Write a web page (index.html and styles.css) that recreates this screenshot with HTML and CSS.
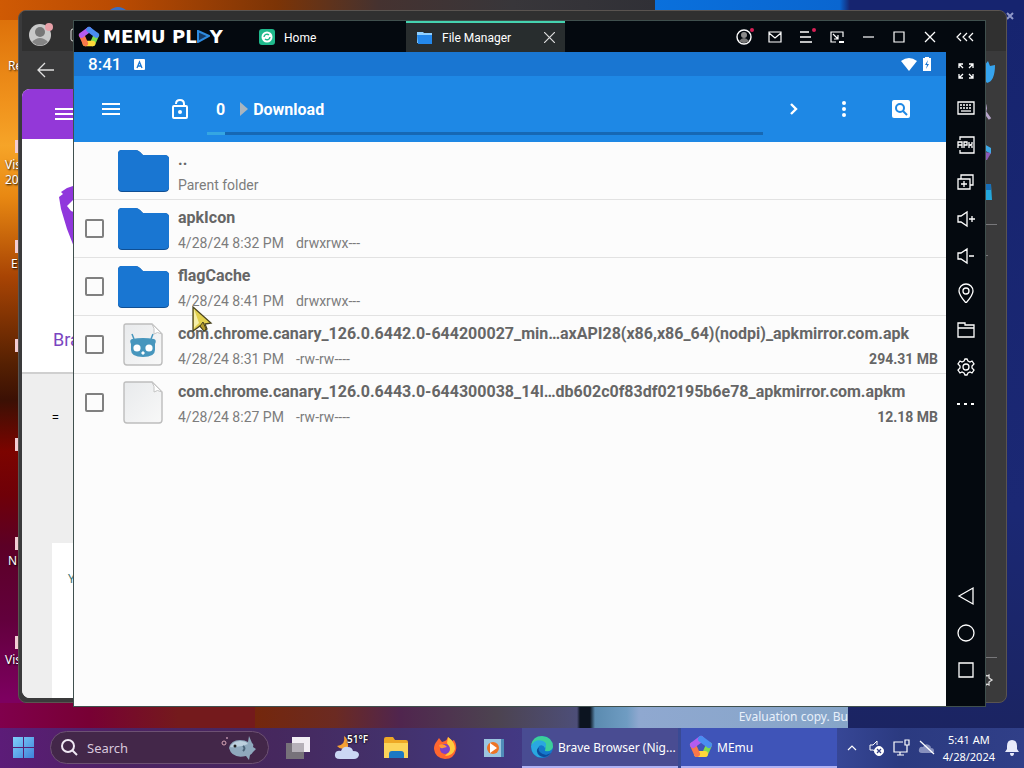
FILE: index.html
```html
<!DOCTYPE html>
<html lang="en">
<head>
    <meta charset="UTF-8">
    <meta name="viewport" content="width=device-width, initial-scale=1.0">
    <title>MEmu - File Manager</title>
    <link rel="stylesheet" href="styles.css">
</head>
<body>
    <svg class="defs" width="0" height="0" aria-hidden="true">
        <symbol id="memu" viewBox="0 0 24 24">
            <g fill="none" stroke-width="6" stroke-linecap="round">
                <path d="M16 19L20 10" stroke="#7fdc4c"/>
                <path d="M8 19H16" stroke="#ffd83a"/>
                <path d="M4 10L8 19" stroke="#f9774a"/>
                <path d="M12 4L4 10" stroke="#b45cf0"/>
                <path d="M20 10L12 4" stroke="#4a8df0"/>
            </g>
        </symbol>
        <symbol id="folder" viewBox="0 0 52 43">
            <path d="M5 1H18Q21 1 23 3L26 6H47Q52 6 52 10V39Q52 43 47 43H5Q1 43 1 39V5Q1 1 5 1Z" fill="#0f4f94"/>
            <path d="M5 1H18Q21 1 23 3L26 6H47Q52 6 52 10V38Q52 42 47 42H5Q1 42 1 38V5Q1 1 5 1Z" fill="#1976d2"/>
        </symbol>
        <symbol id="file" viewBox="0 0 40 43">
            <linearGradient id="paper" x1="0" y1="0" x2="1" y2="1">
                <stop offset="0" stop-color="#e8eaec"/>
                <stop offset="1" stop-color="#f8f8f8"/>
            </linearGradient>
            <path d="M3 1H29L39 11V39Q39 42 36 42H4Q1 42 1 39V3Q1 1 3 1Z" fill="url(#paper)" stroke="#bdbdbd" stroke-width="1.4"/>
            <path d="M29 1L39 11Q34 8 31 11Q32 5 29 1Z" fill="#fff" stroke="#c4c4c4"/>
        </symbol>
    </svg>

    <div class="desktop">
        <span class="shortcut s1">Re</span>
        <span class="shortcut s2">Vis<br>20</span>
        <span class="shortcut s3">E</span>
        <span class="shortcut s4">N</span>
        <span class="shortcut s5">Vis</span>
        <i class="tile t1"></i><i class="tile t2"></i><i class="tile t3"></i><i class="tile t4"></i><i class="tile t5"></i><i class="tile t6"></i>
        <svg class="desk-close" viewBox="0 0 10 10"><path d="M2 2L8 8M8 2L2 8" stroke="#8f98c8" stroke-width="2"/></svg>
        <i class="desk-dot"></i>
        <div class="watermark">Evaluation copy. Bu</div>

        <!-- browser window behind -->
        <section class="browser">
            <div class="browser-bar">
                <svg width="26" height="24" viewBox="0 0 26 24">
                    <circle cx="12" cy="12" r="11" fill="#c9c9c9"/>
                    <circle cx="12" cy="9" r="5" fill="#777"/>
                    <path d="M4 19Q12 11 20 19Q12 26 4 19Z" fill="#858585"/>
                    <circle cx="21" cy="4" r="4" fill="#e8a0a8"/>
                </svg>
                <svg width="12" height="14" viewBox="0 0 12 14" fill="none" stroke="#ddd"><rect x="1" y="1" width="14" height="12" rx="2"/></svg>
            </div>
            <div class="browser-nav">
                <button type="button" aria-label="Back">
                    <svg width="18" height="16" viewBox="0 0 18 16" fill="none" stroke="#e0e0e0" stroke-width="1.3"><path d="M17 8H1M8 1L1 8L8 15"/></svg>
                </button>
            </div>
            <div class="browser-body">
                <div class="page">
                    <div class="page-head">
                        <svg width="24" height="14" viewBox="0 0 24 14" stroke="#fff" stroke-width="2"><path d="M0 2H24M0 7H24M0 12H24"/></svg>
                    </div>
                    <div class="page-hero">
                        <svg width="30" height="70" viewBox="0 0 30 70"><path d="M9 3L18 0H30V70L16 62L9 44L3 24L1 12L5 9L3 7Z" fill="#9037dc"/><path d="M18 12L9 21L13 26L30 32V8Z" fill="#fff"/></svg>
                        <span>Bra</span>
                    </div>
                    <div class="page-rest">
                        <span class="equals">=</span>
                        <div class="page-card">Y</div>
                    </div>
                </div>
                <div class="browser-side">
                    <svg width="16" height="22" viewBox="0 0 16 22"><path d="M0 5L4 0L6 5L11 4Q11 20 3 22L0 18Z" fill="#36a4ee"/></svg>
                    <svg width="16" height="22" viewBox="0 0 16 22"><path d="M0 2Q3 8 0 11M1 11L6 18" fill="none" stroke="#b5a4c8" stroke-width="3"/></svg>
                    <svg width="16" height="22" viewBox="0 0 16 22"><path d="M0 3L7 7V13L0 9Z" fill="#3eaae8"/><path d="M0 11L7 12L3 19H0Z" fill="#8b5bb8"/></svg>
                    <svg width="16" height="22" viewBox="0 0 16 22"><path d="M0 3H7L8 19H0Z" fill="#23a8dd"/><path d="M2 3H7V9H1Z" fill="#176fb8"/></svg>
                    <hr>
                    <hr class="short">
                    <hr class="low">
                    <svg class="side-gear" width="10" height="16" viewBox="0 0 10 16"><path d="M0 2L3 4L5 3L5 6L8 8L5 10L5 13L3 12L0 15M0 6Q3 8 0 10" fill="none" stroke="#ddd" stroke-width="1.3"/></svg>
                </div>
            </div>
        </section>

        <!-- emulator -->
        <section class="memu">
            <header class="titlebar">
                <div class="brand">
                    <svg width="22" height="22"><use href="#memu"/></svg>
                    <span>MEMU PL</span><svg width="13" height="13" viewBox="0 0 13 13"><path d="M1 1L12 6L1 12Z" fill="#153a66" stroke="#2d8ae0" stroke-width="2"/></svg><span>Y</span>
                </div>
                <nav class="tabs">
                    <button type="button" class="tab home">
                        <svg width="16" height="16" viewBox="0 0 16 16"><rect width="16" height="16" rx="3" fill="#1fb98c"/><circle cx="8" cy="8" r="5.5" fill="#fff"/><path d="M5 8A3 3 0 0 1 10 6M11 8A3 3 0 0 1 6 10" fill="none" stroke="#1fb98c" stroke-width="1.4"/></svg>
                        Home
                    </button>
                    <button type="button" class="tab active">
                        <svg width="16" height="12" viewBox="0 0 16 12"><path d="M0 0H6L7 1H15V11H0Z" fill="#8fd0ff"/><path d="M0 3H15V12H1Z" fill="#2488ea"/></svg>
                        File Manager
                        <svg class="tab-close" width="11" height="11" viewBox="0 0 11 11" stroke="#ddd" stroke-width="1.2"><path d="M0 0L11 11M11 0L0 11"/></svg>
                    </button>
                </nav>
                <div class="win-buttons">
                    <button type="button" aria-label="Account"><svg viewBox="0 0 20 20" fill="none"><circle cx="10" cy="10" r="7" stroke="#fff" stroke-width="1.4"/><circle cx="10" cy="8" r="3" fill="#8a8a8a"/><path d="M5 14Q10 8 15 14Q10 18 5 14Z" fill="#777"/><circle cx="18" cy="3" r="2" fill="#d81f55"/></svg></button>
                    <button type="button" aria-label="Messages"><svg viewBox="0 0 20 20" fill="none" stroke="#fff" stroke-width="1.2"><path d="M4 5H16V15H4ZM4 6L10 11L16 6"/></svg></button>
                    <button type="button" aria-label="Menu"><svg viewBox="0 0 20 20" fill="none" stroke="#fff" stroke-width="1.3"><path d="M4 5H13M4 10H15M4 15H16"/><circle cx="18" cy="3" r="2" fill="#d81f55" stroke="none"/></svg></button>
                    <button type="button" aria-label="Small window"><svg viewBox="0 0 20 20" fill="none" stroke="#fff" stroke-width="1.2"><path d="M9 15H4V5H16V10M6 7L11 12M11 8V12H7"/><path d="M12 15H17" stroke-width="2"/></svg></button>
                    <button type="button" aria-label="Minimize"><svg viewBox="0 0 20 20" stroke="#fff" stroke-width="1.2"><path d="M5 10H16"/></svg></button>
                    <button type="button" aria-label="Maximize"><svg viewBox="0 0 20 20" fill="none" stroke="#fff" stroke-width="1.2"><path d="M5 5H15V15H5Z"/></svg></button>
                    <button type="button" aria-label="Close"><svg viewBox="0 0 20 20" stroke="#fff" stroke-width="1.3"><path d="M5 5L15 15M15 5L5 15"/></svg></button>
                    <button type="button" class="wide" aria-label="Collapse sidebar"><svg viewBox="0 0 20 20" fill="none" stroke="#fff" stroke-width="1.2"><path d="M6 6L2 10L6 14M12 6L8 10L12 14M18 6L14 10L18 14"/></svg></button>
                </div>
            </header>

            <div class="memu-body">
                <main class="android">
                    <div class="statusbar">
                        <span class="time">8:41</span>
                        <svg width="11" height="11" viewBox="0 0 11 11"><rect width="11" height="11" rx="1" fill="#fff"/><path d="M3 9L5.500 3L8 9M4 7H7" fill="none" stroke="#1976d2" stroke-width="1.3"/></svg>
                        <span class="grow"></span>
                        <svg width="16" height="13" viewBox="0 0 16 13"><path d="M0 3Q8 -3 16 3L8 13Z" fill="#fff"/></svg>
                        <svg width="8" height="14" viewBox="0 0 8 14"><path d="M2 0H6V1H8V14H0V1H2Z" fill="#fff"/><path d="M5 3L2 8H4L3 12L6 7H4Z" fill="#1976d2"/></svg>
                    </div>
                    <div class="toolbar">
                        <button type="button" class="menu" aria-label="Open menu"><svg width="18" height="12" viewBox="0 0 18 12" stroke="#fff" stroke-width="2"><path d="M0 1H18M0 6H18M0 11H18"/></svg></button>
                        <div class="path">
                            <div class="crumbs">
                                <svg width="16" height="20" viewBox="0 0 16 20" fill="none" stroke="#fff" stroke-width="2"><rect x="1" y="7" width="14" height="12" rx="1"/><path d="M4 5Q4 1 8 1Q12 1 12 5V7"/><circle cx="8" cy="13" r="2" fill="#fff" stroke="none"/></svg>
                                <a href="#" class="root">0</a>
                                <svg class="sep" width="8" height="16" viewBox="0 0 8 16"><path d="M0 1L8 8L0 15Z" fill="#a9b5bf"/></svg>
                                <a href="#">Download</a>
                            </div>
                            <div class="scroll"><span></span></div>
                        </div>
                        <div class="actions">
                            <button type="button" aria-label="Next"><svg width="18" height="18" viewBox="0 0 18 18" fill="none" stroke="#fff" stroke-width="2.400"><path d="M7 4L12 9L7 14"/></svg></button>
                            <button type="button" aria-label="More"><svg width="18" height="18" viewBox="0 0 18 18" fill="#fff"><circle cx="9" cy="3" r="2"/><circle cx="9" cy="9" r="2"/><circle cx="9" cy="15" r="2"/></svg></button>
                            <button type="button" aria-label="Search"><svg width="18" height="18" viewBox="0 0 18 18"><rect width="18" height="18" rx="2" fill="#fff"/><circle cx="8" cy="8" r="4" fill="none" stroke="#1e88e5" stroke-width="2"/><path d="M11 11L15 15" stroke="#1e88e5" stroke-width="2"/></svg></button>
                        </div>
                    </div>

                    <ul class="files">
                        <li>
                            <span class="nocheck"></span>
                            <svg class="thumb"><use href="#folder"/></svg>
                            <div class="info"><strong>..</strong><p>Parent folder</p></div>
                        </li>
                        <li>
                            <input type="checkbox" aria-label="apkIcon">
                            <svg class="thumb"><use href="#folder"/></svg>
                            <div class="info"><strong>apkIcon</strong><p>4/28/24 8:32 PM <span>drwxrwx---</span></p></div>
                        </li>
                        <li>
                            <input type="checkbox" aria-label="flagCache">
                            <svg class="thumb"><use href="#folder"/></svg>
                            <div class="info"><strong>flagCache</strong><p>4/28/24 8:41 PM <span>drwxrwx---</span></p></div>
                        </li>
                        <li>
                            <input type="checkbox" aria-label="com.chrome.canary_126.0.6442.0 apk">
                            <svg class="thumb" viewBox="0 0 52 43">
                                <use href="#file" x="6" y="0" width="40" height="43"/>
                                <path d="M17 16L15 11M34 16L36 11" stroke="#4796bd" stroke-width="1.500"/>
                                <path d="M15 16Q26 14 37 16Q40 17 38 21V27Q38 34 26 34Q14 34 14 27V21Q12 17 15 16Z" fill="#4796bd"/>
                                <circle cx="20" cy="25" r="3.600" fill="#fff"/><circle cx="32" cy="25" r="3.600" fill="#fff"/>
                                <path d="M24 30L26 28L28 30L26 32Z" fill="#fff"/>
                            </svg>
                            <div class="info"><strong>com.chrome.canary_126.0.6442.0-644200027_min…axAPI28(x86,x86_64)(nodpi)_apkmirror.com.apk</strong><p>4/28/24 8:31 PM <span>-rw-rw----</span><b>294.31 MB</b></p></div>
                        </li>
                        <li>
                            <input type="checkbox" aria-label="com.chrome.canary_126.0.6443.0 apkm">
                            <svg class="thumb" viewBox="0 0 52 43"><use href="#file" x="6" y="0" width="40" height="43"/></svg>
                            <div class="info"><strong>com.chrome.canary_126.0.6443.0-644300038_14l…db602c0f83df02195b6e78_apkmirror.com.apkm</strong><p>4/28/24 8:27 PM <span>-rw-rw----</span><b>12.18 MB</b></p></div>
                        </li>
                    </ul>
                </main>

                <aside class="tools">
                    <button type="button" aria-label="Full screen"><svg viewBox="0 0 20 20"><path d="M3 7V3H7M3 3L7 7M13 3H17V7M17 3L13 7M3 13V17H7M3 17L7 13M17 13V17H13M17 17L13 13"/></svg></button>
                    <button type="button" aria-label="Key mapping"><svg viewBox="0 0 20 20"><path d="M2 4H18V16H2Z"/><path d="M4 7H16M4 10H16" stroke-dasharray="2 1"/><path d="M5 13H15"/></svg></button>
                    <button type="button" aria-label="Install APK"><svg viewBox="0 0 20 20"><path d="M4 5V2H18V18H4V15M2 13V7H6V13M2 10H6M8 13V7H11V10H8M13 7V13M16 7V9L14 10L16 11V13"/></svg></button>
                    <button type="button" aria-label="Multi window"><svg viewBox="0 0 20 20"><path d="M2 7H14V17H2ZM5 7V3H17V13H14M8 9V15M5 12H11"/></svg></button>
                    <button type="button" aria-label="Volume up"><svg viewBox="0 0 20 20"><path d="M2 7H5L11 3V17L5 13H2ZM13 10H19M16 7V13"/></svg></button>
                    <button type="button" aria-label="Volume down"><svg viewBox="0 0 20 20"><path d="M2 7H5L11 3V17L5 13H2ZM13 10H18"/></svg></button>
                    <button type="button" aria-label="Location"><svg viewBox="0 0 20 20"><path d="M10 20Q3 12 3 8A7 7 0 0 1 17 8Q17 12 10 20Z"/><circle cx="10" cy="8" r="3"/></svg></button>
                    <button type="button" aria-label="Shared folder"><svg viewBox="0 0 20 20"><path d="M2 17V3H9V5H18V17ZM2 8H18"/></svg></button>
                    <button type="button" aria-label="Settings"><svg viewBox="0 0 20 20"><path d="M8 4L9 2H11L12 4L14 5L16 4L18 7L16 9V11L18 13L16 16L14 15L12 16L11 18H9L8 16L6 15L4 16L2 13L4 11V9L2 7L4 4L6 5Z"/><circle cx="10" cy="10" r="3"/></svg></button>
                    <button type="button" aria-label="More"><svg viewBox="0 0 20 20"><path d="M1 10H4M8 10H11M15 10H18" stroke-width="2"/></svg></button>
                    <span class="grow"></span>
                    <button type="button" aria-label="Back"><svg viewBox="0 0 20 20"><path d="M3 10L17 2V18Z"/></svg></button>
                    <button type="button" aria-label="Home"><svg viewBox="0 0 20 20"><circle cx="10" cy="10" r="8"/></svg></button>
                    <button type="button" aria-label="Recent"><svg viewBox="0 0 20 20"><path d="M3 3H17V17H3Z"/></svg></button>
                </aside>
            </div>
        </section>

        <svg class="cursor" width="22" height="28" viewBox="0 0 22 28"><path d="M1 1L19 17L13 18L15 23L12 25L8 20L1 25Z" fill="#e2d04e" stroke="#4a4420" stroke-width="1.300"/><path d="M2 3L7 17L2 22Z" fill="#f6efa8"/><path d="M8 20L11 16L14 23L12 25Z" fill="#b49b2c" stroke="#4a4420"/></svg>
    </div>

    <footer class="taskbar">
        <button type="button" class="start" aria-label="Start"><svg width="22" height="22" viewBox="0 0 22 22"><linearGradient id="win" x1="0" y1="0" x2="1" y2="1"><stop offset="0" stop-color="#7fd0fa"/><stop offset="1" stop-color="#3f83da"/></linearGradient><path d="M0 0H10V10H0ZM11 0H21V10H11ZM0 11H10V21H0ZM11 11H21V21H11Z" fill="url(#win)"/></svg></button>
        <label class="search">
            <svg width="18" height="18" viewBox="0 0 18 18" fill="none" stroke="#f0e8f4" stroke-width="2"><circle cx="7" cy="7" r="6"/><path d="M11 11L16 16"/></svg>
            <input type="text" placeholder="Search" aria-label="Search">
            <svg width="36" height="26" viewBox="0 0 36 26"><path d="M8 13Q10 5 19 5Q24 5 27 7L28 1L31 8Q33 9 32 12L35 14L32 17Q31 19 29 20L28 25L25 21Q11 24 8 13Z" fill="#8fa9bd"/><path d="M9 12Q12 6 19 6Q25 6 27 9Q18 13 9 12Z" fill="#bcd0de"/><circle cx="14" cy="11" r="1.500" fill="#222"/><path d="M22 11Q25 13 22 16" fill="none" stroke="#4a6478" stroke-width="2"/><circle cx="3" cy="8" r="2" fill="none" stroke="#d8a5b5"/><circle cx="6" cy="3" r="1" fill="#b890a8"/></svg>
        </label>
        <div class="pins">
            <button type="button" aria-label="Task view"><svg width="24" height="24" viewBox="0 0 24 24"><path d="M0 7H18V23H0Z" fill="#77727a"/><path d="M6 1H24V16H6Z" fill="#f2eef4"/><path d="M6 7H18V16H6Z" fill="#b5b0b8"/></svg></button>
            <button type="button" class="weather" aria-label="Weather"><svg width="26" height="26" viewBox="0 0 26 26"><path d="M10 1Q12 10 3 11Q7 16 14 12Q15 4 10 1Z" fill="#f5a033"/><path d="M6 24Q0 24 1 19Q2 15 7 16Q9 11 14 12Q18 12 19 16Q25 16 25 20Q24 24 20 24Z" fill="#cbd7f4"/></svg><span>51°F</span></button>
            <button type="button" aria-label="File Explorer"><svg width="24" height="24" viewBox="0 0 24 24"><path d="M0 3Q0 1 2 1H9L11 4H22Q24 4 24 6V22H0Z" fill="#eea825"/><path d="M0 7H24V22H0Z" fill="#fcd45a"/><path d="M5 22V18Q5 15 8 15H17Q20 15 20 18V22Z" fill="#1d78c4"/></svg></button>
            <button type="button" aria-label="Firefox"><svg width="24" height="24" viewBox="0 0 24 24"><path d="M4 5L6 2L9 6L12 5Q14 4 15 1L19 5L21 4Q24 9 23 14Q21 23 12 23Q2 22 1 13Q1 8 4 5Z" fill="#ff662f"/><path d="M15 1Q22 6 22 13Q20 20 12 20Q19 14 14 7Z" fill="#ffcb3d"/><circle cx="12" cy="13" r="5" fill="#7c41c8"/><path d="M6 9Q11 7 14 11L10 12Q7 13 6 9Z" fill="#ff9838"/></svg></button>
            <button type="button" aria-label="Media Player"><svg width="20" height="20" viewBox="0 0 20 20"><path d="M0 1H20V19H0Z" fill="#9cc6e0"/><path d="M17 1H20V19H17Z" fill="#4f8cb8"/><circle cx="9" cy="10" r="6" fill="#ee7424"/><path d="M6 5L13 10L6 15Z" fill="#fff"/></svg></button>
        </div>
        <button type="button" class="task browser-task">
            <svg width="24" height="24" viewBox="0 0 24 24"><circle cx="12" cy="12" r="11" fill="#1478cc"/><path d="M1 10Q3 1 12 1Q23 2 23 12Q22 17 15 16Q17 10 11 8Q6 6 1 10Z" fill="#3ccf9a"/><path d="M1 11Q5 3 13 6Q18 8 15 13Q13 9 9 11Q6 18 14 22Q2 24 1 11Z" fill="#2aa8e0"/><path d="M9 12Q7 18 16 20L21 18Q16 24 10 21Q4 16 9 12Z" fill="#0d4c9c"/></svg>
            <span>Brave Browser (Nig...</span>
        </button>
        <button type="button" class="task memu-task">
            <svg width="24" height="24"><use href="#memu"/></svg>
            <span>MEmu</span>
        </button>
        <div class="tray">
            <svg class="more" width="10" height="16" viewBox="0 0 10 16" fill="none" stroke="#fff" stroke-width="1.200"><path d="M1 10L5 6L9 10"/></svg>
            <svg width="16" height="16" viewBox="0 0 16 16" fill="none" stroke="#fff"><path d="M6 11L4 10H1V5H4L8 1V5"/><circle cx="10" cy="11" r="4.500" fill="#fff"/><path d="M8 9L12 13M12 9L8 13" stroke="#333f85" stroke-width="1.300"/></svg>
            <svg width="17" height="18" viewBox="0 0 17 18" fill="none" stroke="#fff" stroke-width="1.200"><path d="M10 3H1V13H14V9M7 13V16M4 16H11M12 1H16V6H12ZM14 6V9"/></svg>
            <svg width="17" height="16" viewBox="0 0 17 16"><path d="M4 13Q0 13 1 9Q2 6 5 7Q7 3 11 5Q13 6 13 8Q16 8 16 11Q16 13 13 13Z" fill="#8790bd"/><path d="M2 1L16 14" stroke="#fff" stroke-width="1.300"/></svg>
            <div class="clock">5:41 AM<br>4/28/2024</div>
            <svg width="14" height="18" viewBox="0 0 14 18" fill="#e8ebfa"><path d="M7 1Q12 1 12 7V10L14 13H0L2 10V7Q2 1 7 1ZM5 14H9Q9 17 7 17Q5 17 5 14Z"/></svg>
        </div>
    </footer>
</body>
</html>
```

FILE: styles.css
```css
* {
    box-sizing: border-box;
}

body {
    margin: 0;
    min-height: 100vh;
    display: flex;
    flex-direction: column;
    overflow: hidden;
    font-family: "Noto Sans", sans-serif;
    font-size: 12px;
}

button {
    display: flex;
    align-items: center;
    justify-content: center;
    padding: 0;
    border: 0;
    background: none;
    color: inherit;
    font: inherit;
}

svg {
    display: block;
    flex-shrink: 0;
}

.defs {
    position: absolute;
}

.grow {
    flex: 1;
}

/* desktop */
.desktop {
    position: relative;
    flex: 1;
    background:
        linear-gradient(90deg, #cf5a04 0, #b84a02 12%, #7c3406 27%, #453230 37%, #38363a 50%, #303036 64%, #0a70dc 64%, #0a66d0 82%, #16246f 83%) top / 100% 20px no-repeat,
        linear-gradient(90deg, #80004c 0, #780034 35%, #741a1c 70%) left bottom / 255px 25px no-repeat,
        linear-gradient(90deg, #74270c 0, #6b2a22 25%, #50254e 45%, #4c4350 75%, #4d4e78 100%) 255px bottom / 322px 25px no-repeat,
        linear-gradient(180deg, #d96a06 0, #f0921c 14%, #f6a428 20%, #e88812 27%, #a84404 38%, #552002 50%, #3b1004 55%, #7c0400 62%, #6f0008 68%, #5c0026 75%, #62003c 85%, #7d0060 96%) left / 24px 100% no-repeat,
        linear-gradient(180deg, #16246f, #1b2874 70%, #1b2462);
}

.shortcut {
    position: absolute;
    left: 5px;
    color: #fff;
    line-height: 15px;
    text-shadow: 1px 1px 2px #000;
}

.s1 { top: 58px; left: 8px; }
.s2 { top: 157px; }
.s3 { top: 256px; left: 11px; }
.s4 { top: 553px; left: 8px; }
.s5 { top: 652px; }

.tile {
    position: absolute;
    left: 15px;
    width: 4px;
    height: 13px;
    background: #f2cdd4;
}

.t1 { top: 140px; }
.t2 { top: 240px; }
.t3 { top: 339px; }
.t4 { top: 438px; }
.t5 { top: 537px; }
.t6 { top: 636px; }

.desk-close {
    position: absolute;
    top: 11px;
    right: 9px;
    width: 10px;
    height: 10px;
}

.desk-dot {
    position: absolute;
    top: 7px;
    left: 106px;
    width: 24px;
    height: 24px;
    border-radius: 50%;
    background: #3a6fc4;
}

.watermark {
    position: absolute;
    right: 176px;
    bottom: 0;
    width: 271px;
    height: 24px;
    padding-top: 3px;
    color: #e8f0fa;
    line-height: 20px;
    text-align: right;
    background: linear-gradient(90deg, #4d4e78 0, #0c1420 3px, #0c1420 13px, #5b8bb0 18px, #6f9cc2 50px, #8fa8d0 62px, #86a5c8 100%);
}

/* browser window */
.browser {
    position: absolute;
    top: 10px;
    left: 18px;
    right: 17px;
    bottom: 25px;
    display: flex;
    flex-direction: column;
    padding: 0 0 4px 3px;
    border: 1px solid #5a5450;
    border-radius: 8px;
    background: #3a3a3b;
    overflow: hidden;
}

.browser-bar {
    display: flex;
    align-items: center;
    gap: 16px;
    height: 40px;
    padding: 8px 0 0 6px;
    background: #303030;
}

.browser-nav {
    display: flex;
    align-items: center;
    height: 38px;
    padding-left: 15px;
}

.browser-body {
    flex: 1;
    display: flex;
}

.page {
    flex: 1;
    display: flex;
    flex-direction: column;
    border-radius: 8px;
    background: #fff;
    overflow: hidden;
}

.page-head {
    height: 50px;
    padding: 18px 0 0 33px;
    background: #9338d8;
}

.page-hero {
    height: 235px;
    padding: 46px 0 0 36px;
    border-bottom: 2px solid #cfcfcf;
}

.page-hero span {
    display: block;
    margin: 71px 0 0 -5px;
    color: #7a45c0;
    font: 18px/28px Roboto, sans-serif;
}

.page-rest {
    flex: 1;
    display: flex;
    flex-direction: column;
    padding: 35px 0 0 30px;
    background: #eee;
}

.equals {
    height: 134px;
}

.page-card {
    flex: 1;
    padding: 27px 0 0 16px;
    background: #fff;
    color: #39706e;
}

.browser-side {
    display: flex;
    flex-direction: column;
    width: 22px;
    margin-top: -28px;
    gap: 18px;
}

.browser-side hr {
    width: 13px;
    margin: 3px 0 0;
    border: 0;
    border-top: 1px solid #77777a;
}

.browser-side .short {
    width: 4px;
    margin-top: 12px;
}

.browser-side .low {
    margin-top: auto;
}

.side-gear {
    margin: -4px 0 10px;
}

/* emulator window */
.memu {
    position: absolute;
    top: 20px;
    left: 73px;
    right: 38px;
    bottom: 21px;
    display: flex;
    flex-direction: column;
    border: 1px solid #40504e;
    background: #04090f;
    color: #fff;
}

.titlebar {
    display: flex;
    height: 31px;
}

.brand {
    display: flex;
    align-items: center;
    width: 176px;
    padding-left: 4px;
    font: bold 18px/20px "DejaVu Sans", sans-serif;
    white-space: pre;
}

.brand svg:first-child {
    margin-right: 3px;
}

.tabs {
    display: flex;
    flex: 1;
    font-family: Roboto, sans-serif;
}

.tab {
    justify-content: flex-start;
    gap: 9px;
    padding: 2px 9px 0;
}

.home {
    width: 156px;
}

.home svg {
    margin-bottom: 2px;
}

.active {
    width: 159px;
    padding: 0 10px 0 11px;
    border-top: 2px solid #45d3b0;
    background: #282d2e;
}

.tab-close {
    margin-left: auto;
}

.win-buttons {
    display: flex;
}

.win-buttons button {
    width: 31px;
}

.win-buttons .wide {
    width: 40px;
}

.win-buttons svg,
.tools svg {
    width: 20px;
    height: 20px;
}

.memu-body {
    flex: 1;
    display: flex;
}

.android {
    flex: 1;
    min-width: 0;
    background: #fcfcfc;
    font-family: Roboto, sans-serif;
}

.statusbar {
    display: flex;
    align-items: center;
    height: 24px;
    gap: 6px;
    padding: 0 15px 0 14px;
    background: #1976d2;
}

.time {
    width: 40px;
    font-size: 17px;
    font-weight: 500;
}

.toolbar {
    display: flex;
    height: 66px;
    background: #1e88e5;
}

.menu {
    width: 73px;
}

.path {
    flex: 1;
    display: flex;
    flex-direction: column;
    padding-left: 25px;
}

.crumbs {
    flex: 1;
    display: flex;
    align-items: center;
    padding-top: 10px;
    font-size: 16px;
    font-weight: 700;
}

.crumbs a {
    color: #fff;
    text-decoration: none;
}

.root {
    margin-left: 28px;
}

.sep {
    margin: 0 5px 0 15px;
}

.scroll {
    height: 3px;
    margin: 0 0 7px 35px;
    background: #1668b4;
}

.scroll span {
    display: block;
    width: 18px;
    height: 3px;
    background: #35a6e2;
}

.actions {
    display: flex;
    align-items: center;
    gap: 33px;
    padding: 0 36px 0 21px;
}

.actions button:last-child {
    margin-left: 6px;
}

.files {
    margin: 0;
    padding: 0;
    list-style: none;
}

.files li {
    display: flex;
    align-items: center;
    height: 58px;
    padding: 0 8px 0 11px;
    border-bottom: 1px solid #e2e2e2;
}

.files li:last-child {
    border-bottom-color: transparent;
}

.files input,
.nocheck {
    width: 19px;
    height: 19px;
    margin: 0 13px 0 0;
}

.files input {
    appearance: none;
    border: 2px solid #808080;
    border-radius: 2px;
}

.thumb {
    width: 52px;
    height: 43px;
    margin-right: 9px;
}

.info {
    flex: 1;
    min-width: 0;
    padding-top: 4px;
}

.info strong {
    display: block;
    color: #666;
    font-size: 16px;
    font-weight: 700;
    line-height: 24px;
    white-space: nowrap;
}

.info p {
    display: flex;
    gap: 12px;
    margin: 0;
    color: #7c7c7c;
    font-size: 14px;
    line-height: 26px;
}

.info b {
    margin-left: auto;
    color: #666;
}

.tools {
    display: flex;
    flex-direction: column;
    width: 39px;
    padding-bottom: 18px;
}

.tools button {
    height: 37px;
}

.tools svg {
    fill: none;
    stroke: #fff;
    stroke-width: 1.3;
}

.cursor {
    position: absolute;
    top: 306px;
    left: 192px;
}

/* taskbar */
.taskbar {
    display: flex;
    height: 40px;
    color: #fff;
    background: linear-gradient(90deg, #5c1c78 0, #4c2362 12%, #46285e 27%, #43316b 38%, #433882 50%, #394a94 66%, #3a4a9c 80%, #2b3a80 88%, #303f88 100%);
}

.start {
    width: 50px;
    padding-right: 3px;
}

.search {
    display: flex;
    align-items: center;
    gap: 8px;
    width: 219px;
    height: 33px;
    margin-top: 3px;
    padding: 0 11px 0 10px;
    border: 1px solid #6d5173;
    border-radius: 17px;
    background: #432749;
}

.search input {
    flex: 1;
    min-width: 0;
    padding: 0;
    border: 0;
    outline: 0;
    background: none;
    color: #fff;
    font: 13px/20px "Noto Sans", sans-serif;
}

.search input::placeholder {
    color: #d8c8dc;
    opacity: 1;
}

.pins {
    display: flex;
    padding-left: 4px;
}

.pins button {
    width: 49px;
}

.weather {
    position: relative;
}

.weather span {
    position: absolute;
    top: 4px;
    left: 25px;
    font-size: 10px;
    font-weight: 600;
    text-shadow: 0 0 2px #000, 0 0 2px #000;
}

.task {
    justify-content: flex-start;
    gap: 4px;
    width: 156px;
    margin-right: 3px;
    padding-left: 8px;
    border-bottom: 2px solid #b0b2f4;
    white-space: nowrap;
}

.browser-task {
    margin-left: 4px;
    background: #494c92;
}

.memu-task {
    background: #3f54b8;
}

.tray {
    display: flex;
    align-items: center;
    gap: 8px;
    margin-left: auto;
    padding-right: 5px;
}

.more {
    margin-right: 4px;
}

.clock {
    margin-right: 2px;
    font-size: 11px;
    line-height: 17px;
    text-align: center;
}
```
